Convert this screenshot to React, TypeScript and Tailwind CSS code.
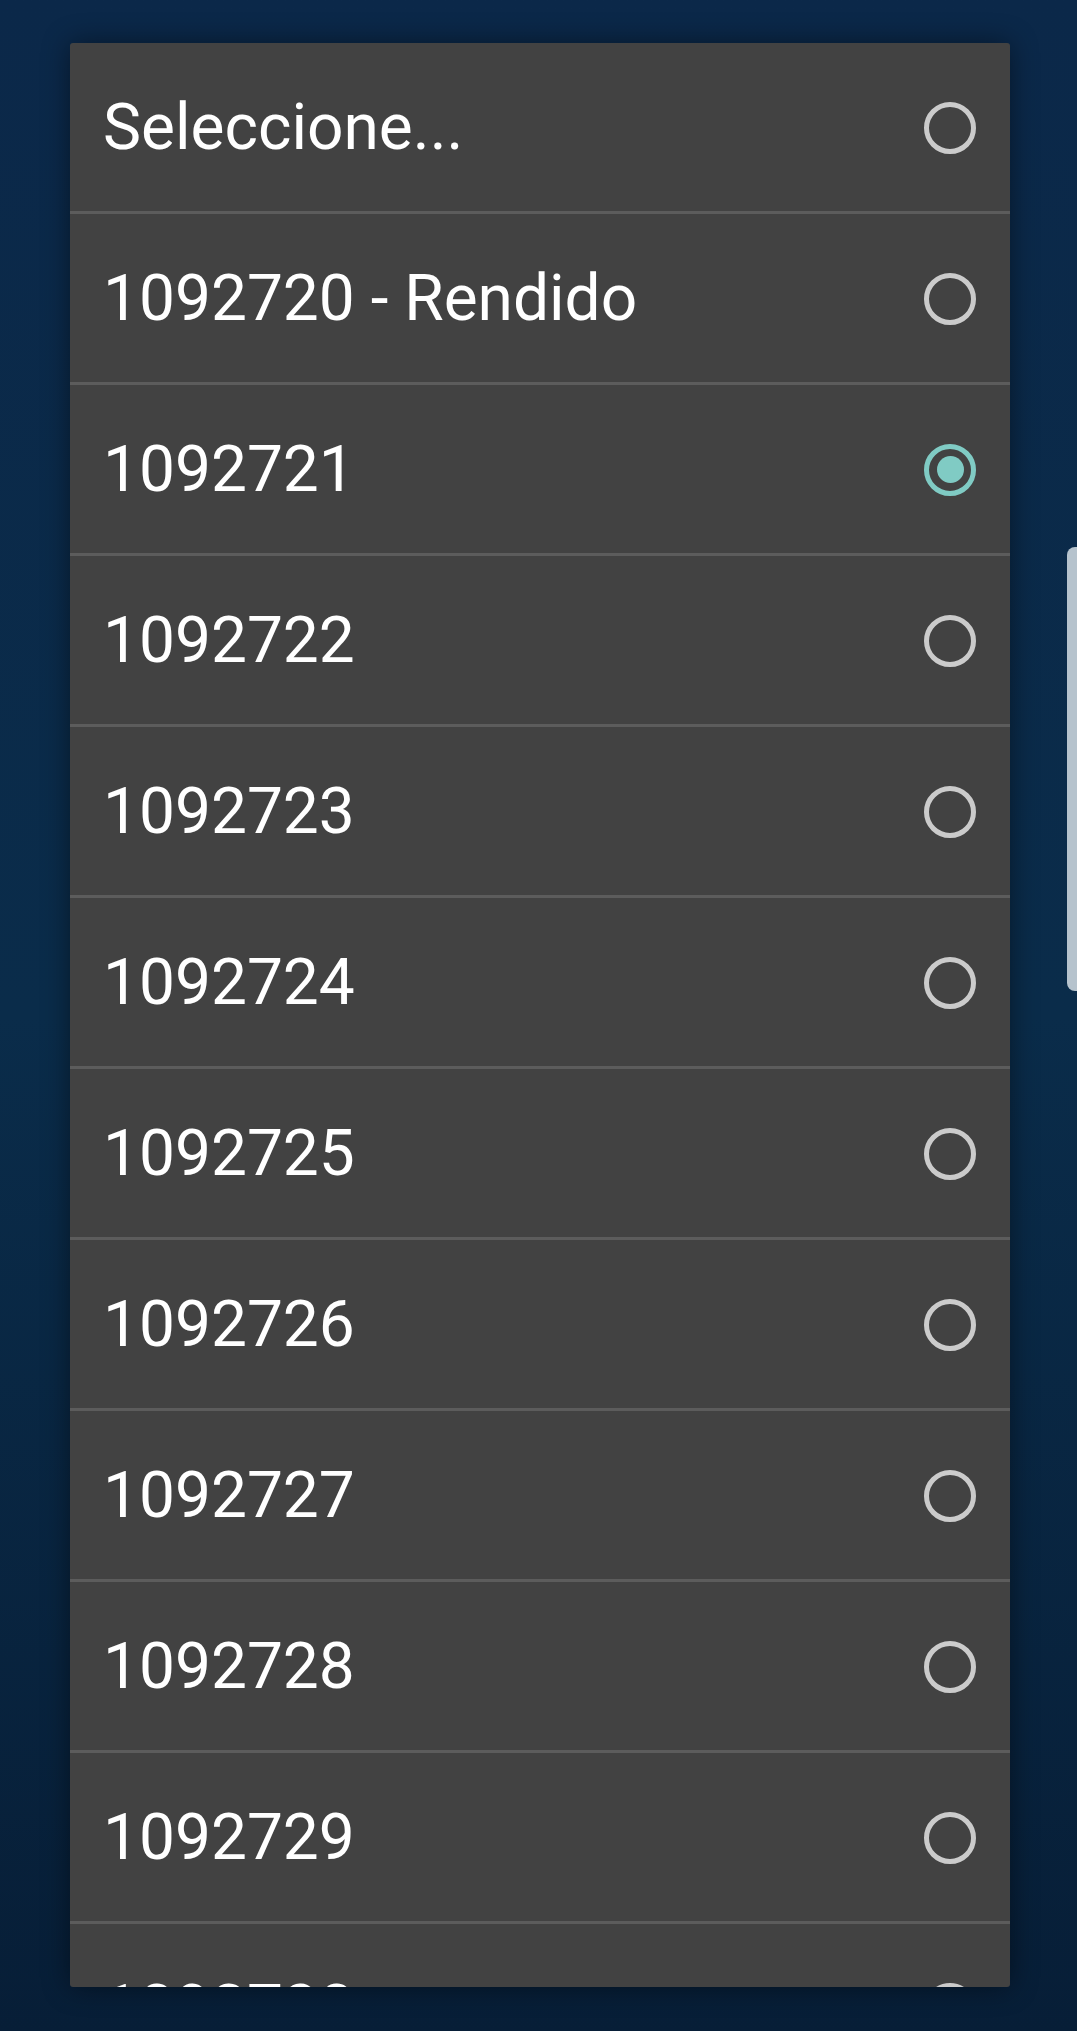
import { useState } from "react";

type Option = {
  value: string;
  label: string;
};

const options: Option[] = [
  { value: "", label: "Seleccione..." },
  { value: "1092720", label: "1092720 - Rendido" },
  { value: "1092721", label: "1092721" },
  { value: "1092722", label: "1092722" },
  { value: "1092723", label: "1092723" },
  { value: "1092724", label: "1092724" },
  { value: "1092725", label: "1092725" },
  { value: "1092726", label: "1092726" },
  { value: "1092727", label: "1092727" },
  { value: "1092728", label: "1092728" },
  { value: "1092729", label: "1092729" },
  { value: "1092730", label: "1092730" },
];

const Radio = ({ checked }: { checked: boolean }) => {
  if (checked)
    return (
      <span className="flex h-[52px] w-[52px] shrink-0 items-center justify-center rounded-full border-[5px] border-[#80cbc4]">
        <span className="h-[27px] w-[27px] rounded-full bg-[#80cbc4]" />
      </span>
    );
  return (
    <span className="h-[52px] w-[52px] shrink-0 rounded-full border-[5px] border-[#cbcbcb]" />
  );
};

export default function App() {
  const [selected, setSelected] = useState("1092721");

  return (
    <div className="relative h-[2031px] w-[1077px] overflow-hidden bg-gradient-to-b from-[#0b2849] via-[#0a2c4a] to-[#071e37] font-['Roboto',sans-serif]">
      {/* card behind the dim layer, peeking out on the right */}
      <div className="absolute left-[1067px] top-[547px] h-[444px] w-[30px] rounded-l-[8px] bg-[#b6c3cd]" />

      <div className="relative flex pl-[70px] pt-[43px]">
        <div className="flex h-[1944px] w-[940px] flex-col overflow-hidden rounded-[3px] bg-[#424242] shadow-[0_0_28px_rgba(0,0,0,0.45)]">
          {options.map((option) => (
            <button
              key={option.label}
              type="button"
              onClick={() => setSelected(option.value)}
              className="flex h-[171px] shrink-0 items-center justify-between border-b-[3px] border-[#5c5c5c] pl-[33px] pr-[34px] pt-px text-left"
            >
              <span className="text-[64px] leading-none text-white">
                {option.label}
              </span>
              <Radio checked={selected === option.value} />
            </button>
          ))}
        </div>
      </div>
    </div>
  );
}
